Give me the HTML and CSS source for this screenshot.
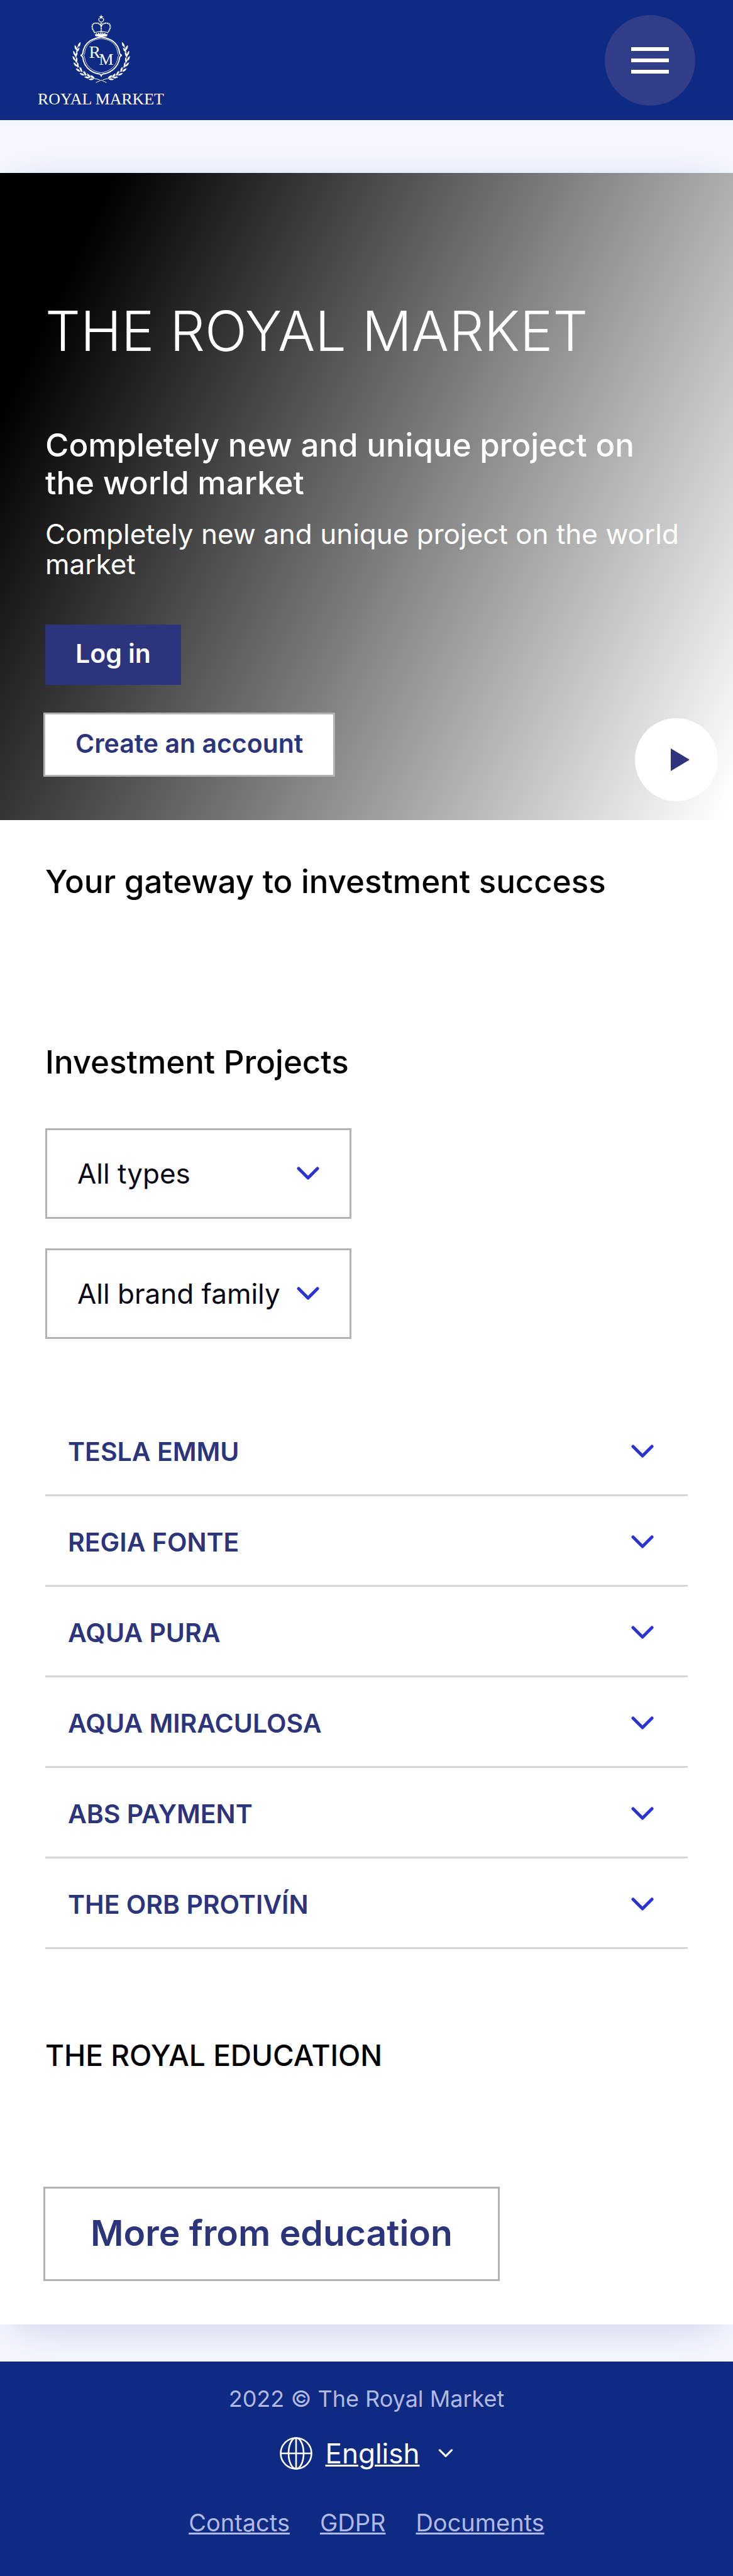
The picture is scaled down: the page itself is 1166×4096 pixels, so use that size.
FILE: index.html
```html
<!DOCTYPE html>
<html lang="en">
<head>
<meta charset="utf-8">
<meta name="viewport" content="width=device-width, initial-scale=1">
<title>The Royal Market</title>
<link rel="stylesheet" href="styles.css">
</head>
<body>
<svg width="0" height="0" class="defs" aria-hidden="true">
  <symbol id="chevron" viewBox="0 0 36 22"><path d="M3 3l15 15L33 3" fill="none" stroke="currentColor" stroke-width="5" stroke-linecap="round" stroke-linejoin="round"/></symbol>
  <symbol id="leaf" viewBox="-6 -10 12 10" overflow="visible"><path d="M0 0Q-3-4 0-9Q3-4 0 0z" fill="#fff"/></symbol>
</svg>
<header class="header">
  <a class="logo" href="#" aria-label="Royal Market">
    <svg viewBox="58 22 208 150" fill="none" stroke="#fff">
      <path d="M161.500 24l1 2.600 2.800.1-2.200 1.700.8 2.700-2.400-1.600-2.400 1.600.8-2.700-2.200-1.700 2.800-.1z" fill="#fff" stroke="none"/>
      <path d="M158.500 29.500a3.800 3.800 0 1 0 6 0" stroke-width="1.200"/>
      <path d="M151.500 53c-8-10-4-16 2-15.500 4 0 7 2 8 5 1-3 4-5 8-5 6-.5 10 5.500 2 15.500M161.500 37v16" stroke-width="2.200" stroke-dasharray="1.900 .7"/>
      <path d="M151 52.500q10.500-3 21 0M151.500 56q10-2 20 0" stroke-width="1.200"/>
      <path d="M153 54.300q8.500-2 17 0" stroke-width="1.600" stroke-dasharray="1.600 1.800"/>
      <path d="M151.500 56.500q10-2 20 0l-1 2-6 .8q-3 1-6 0l-6-.8z" fill="#fff" stroke="none"/>
      <path d="M161.500 59.500C164 61 188 61 191 86q1 2.500 3.500 3-2.500.5-3.500 3c-2 20-20 26-26 26.500q-2.500.5-3.500 3-1-2.500-3.500-3c-6-.5-24-6.500-26-26.500q-1-2.500-3.500-3 2.500-.5 3.500-3c3-25 27-25 29.500-26.500z" stroke-width="2"/>
      <path d="M161.500 62.500C165 62.500 186 64 188 86l1.500 3-1.500 3c-2 17-16 23-26.500 25-10.500-2-24.500-8-26.500-25l-1.500-3 1.500-3c2-22 23-23.500 26.500-23.500z" stroke-width=".8"/>
      <g id="branch">
        <path d="M126 70c-10 22-6 50 33 58M153 132.500l8.500-4" stroke-width="1"/>
        <g fill="#fff" stroke="none">
          <use href="#leaf" x="-6" y="-10" width="12" height="10" transform="translate(125 76) rotate(22)"/>
          <use href="#leaf" x="-6" y="-10" width="12" height="10" transform="translate(122 81) rotate(-18)"/>
          <use href="#leaf" x="-6" y="-10" width="12" height="10" transform="translate(122 84) rotate(32)"/>
          <use href="#leaf" x="-6" y="-10" width="12" height="10" transform="translate(120 90) rotate(-20)"/>
          <use href="#leaf" x="-6" y="-10" width="12" height="10" transform="translate(120 92) rotate(24)"/>
          <use href="#leaf" x="-6" y="-10" width="12" height="10" transform="translate(120 98) rotate(-28)"/>
          <use href="#leaf" x="-6" y="-10" width="12" height="10" transform="translate(121 101) rotate(12)"/>
          <use href="#leaf" x="-6" y="-10" width="12" height="10" transform="translate(123 107) rotate(-42)"/>
          <use href="#leaf" x="-6" y="-10" width="12" height="10" transform="translate(124 109) rotate(0)"/>
          <use href="#leaf" x="-6" y="-10" width="12" height="10" transform="translate(128 115) rotate(-54)"/>
          <use href="#leaf" x="-6" y="-10" width="12" height="10" transform="translate(130 116) rotate(-12)"/>
          <use href="#leaf" x="-6" y="-10" width="12" height="10" transform="translate(135 121) rotate(-66)"/>
          <use href="#leaf" x="-6" y="-10" width="12" height="10" transform="translate(137 122) rotate(-22)"/>
          <use href="#leaf" x="-6" y="-10" width="12" height="10" transform="translate(143 125) rotate(-80)"/>
          <use href="#leaf" x="-6" y="-10" width="12" height="10" transform="translate(144 125) rotate(-34)"/>
          <use href="#leaf" x="-6" y="-10" width="12" height="10" transform="translate(150 127) rotate(-92)"/>
          <use href="#leaf" x="-6" y="-10" width="12" height="10" transform="translate(151 126) rotate(-54)"/>
        </g>
      </g>
      <use href="#branch" transform="translate(323 0) scale(-1 1)"/>
      <g class="logo-text">
        <text x="142" y="93" font-size="28">R</text>
        <text x="158" y="104" font-size="26">M</text>
        <text x="60" y="167" font-size="26">ROYAL MARKET</text>
      </g>
    </svg>
  </a>
  <button class="menu" type="button" aria-label="Menu"><span></span><span></span><span></span></button>
</header>

<main class="main">
  <section class="hero">
    <h1 class="hero-title">THE ROYAL MARKET</h1>
    <h2 class="heading hero-lead">Completely new and unique project on the world market</h2>
    <p class="hero-text">Completely new and unique project on the world market</p>
    <div class="hero-actions">
      <button class="btn btn-primary" type="button">Log in</button>
      <button class="btn btn-outline" type="button">Create an account</button>
    </div>
    <button class="play" type="button" aria-label="Play video">
      <svg viewBox="0 0 30 36"><path d="M0 0l30 18L0 36z" fill="#2c347c"/></svg>
    </button>
  </section>

  <section class="content">
    <h2 class="heading">Your gateway to investment success</h2>
    <h2 class="heading projects-title">Investment Projects</h2>
    <div class="filters">
      <div class="filter">
        <select aria-label="Type"><option>All types</option></select>
        <svg class="chevron"><use href="#chevron"/></svg>
      </div>
      <div class="filter">
        <select aria-label="Brand family"><option>All brand family</option></select>
        <svg class="chevron"><use href="#chevron"/></svg>
      </div>
    </div>
    <ul class="projects">
      <li><button type="button">TESLA EMMU<svg class="chevron"><use href="#chevron"/></svg></button></li>
      <li><button type="button">REGIA FONTE<svg class="chevron"><use href="#chevron"/></svg></button></li>
      <li><button type="button">AQUA PURA<svg class="chevron"><use href="#chevron"/></svg></button></li>
      <li><button type="button">AQUA MIRACULOSA<svg class="chevron"><use href="#chevron"/></svg></button></li>
      <li><button type="button">ABS PAYMENT<svg class="chevron"><use href="#chevron"/></svg></button></li>
      <li><button type="button">THE ORB PROTIVÍN<svg class="chevron"><use href="#chevron"/></svg></button></li>
    </ul>
    <h2 class="heading education-title">THE ROYAL EDUCATION</h2>
    <button class="btn btn-outline btn-large" type="button">More from education</button>
  </section>
</main>

<footer class="footer">
  <p class="copyright">2022 © The Royal Market</p>
  <button class="language" type="button" aria-haspopup="listbox">
    <svg class="globe" viewBox="0 0 52 52" fill="none" stroke="#fff" stroke-width="2.600"><circle cx="26" cy="26" r="24.500"/><ellipse cx="26" cy="26" rx="12" ry="24.500"/><path d="M26 1.500v49M1.500 26h49"/></svg>
    <span class="language-name">English</span>
    <svg class="chevron chevron-small"><use href="#chevron"/></svg>
  </button>
  <nav class="links">
    <a href="#">Contacts</a>
    <a href="#">GDPR</a>
    <a href="#">Documents</a>
  </nav>
</footer>
</body>
</html>
```
FILE: styles.css
```css
* { box-sizing: border-box; }

body {
  margin: 0;
  background: #f4f7ff;
  color: #000;
  font-family: Inter, "Open Sans", sans-serif;
  font-size: 44px;
}

h1, h2, p, ul { margin: 0; padding: 0; }
button, select {
  margin: 0;
  border: 0;
  background: none;
  color: inherit;
  font: inherit;
  cursor: pointer;
}
.defs { position: absolute; }

.header {
  display: flex;
  justify-content: space-between;
  align-items: center;
  height: 191px;
  padding: 0 60px 0 58px;
  background: #0f2a83;
}
.logo svg { display: block; width: 207px; height: 150px; }
.logo-text { fill: #fff; stroke: none; font-family: "Liberation Serif", serif; }
.menu {
  display: flex;
  flex-direction: column;
  justify-content: center;
  align-items: center;
  gap: 12px;
  width: 144px;
  height: 144px;
  padding: 0;
  border-radius: 50%;
  background: #323d89;
}
.menu span { width: 60px; height: 6px; background: #fff; }

.main {
  margin: 84px 0 59px;
  background: #fff;
  box-shadow: 0 12px 72px -24px rgba(50, 68, 116, .33);
}

.hero {
  position: relative;
  padding: 201px 72px 72px;
  background: linear-gradient(115deg, #000 11%, #fff 99%);
  color: #fff;
}
.hero-title { font-size: 88px; font-weight: 300; line-height: 100px; }
.heading { font-size: 51px; font-weight: 500; line-height: 60px; }
.hero-lead { margin-top: 102px; }
.hero-text { margin-top: 27px; line-height: 48px; }
.hero-actions {
  display: flex;
  flex-direction: column;
  align-items: flex-start;
  gap: 47px;
  margin-top: 72px;
}
.btn {
  height: 96px;
  padding: 0 48px 4px;
  font-size: 41px;
  font-weight: 600;
}
.btn-primary { background: #2c347c; color: #fff; }
.btn-outline { background: #fff; color: #2c347c; box-shadow: 0 0 0 3px #b3b3b3; }
.btn-large { height: 144px; margin-top: 182px; padding: 0 72px 4px; font-size: 57px; }
.play {
  position: absolute;
  right: 24px;
  bottom: 30px;
  width: 132px;
  height: 132px;
  padding: 0 0 0 12px;
  border-radius: 50%;
  background: #fff;
}
.play svg { display: block; width: 30px; height: 36px; margin: 0 auto; }

.content { padding: 68px 72px 72px; }
.projects-title { margin-top: 227px; }
.filters { display: grid; gap: 47px; margin-top: 75px; }
.filter { display: grid; align-items: center; width: 487px; }
.filter > * { grid-area: 1 / 1; }
.filter select {
  appearance: none;
  width: 100%;
  height: 144px;
  padding: 0 90px 0 48px;
  border: 3px solid #b3b3b3;
  border-radius: 0;
  color: #060614;
}
.chevron { width: 36px; height: 22px; color: #2a34d4; pointer-events: none; }
.filter .chevron { justify-self: end; margin-right: 51px; }

.projects { margin-top: 106px; list-style: none; }
.projects li { border-bottom: 3px solid #d6d6d6; }
.projects button {
  display: flex;
  justify-content: space-between;
  align-items: center;
  width: 100%;
  height: 141px;
  padding: 4px 54px 0 36px;
  color: #2c347c;
  font-size: 41px;
  font-weight: 600;
}
.education-title { margin-top: 139px; font-size: 46px; }

.footer {
  display: flex;
  flex-direction: column;
  align-items: center;
  padding: 32px 24px 58px;
  background: #0f2a83;
  color: #b0b9e2;
  font-size: 36px;
  line-height: 54px;
}
.language {
  display: flex;
  align-items: center;
  height: 60px;
  margin-top: 30px;
  padding: 0;
  color: #fff;
  font-size: 44px;
}
.globe { width: 52px; height: 52px; margin-right: 21px; }
.language-name { text-decoration: underline 3px; }
.chevron-small { width: 24px; height: 14px; margin-left: 30px; color: #fff; }
.links {
  display: flex;
  flex-wrap: wrap;
  justify-content: center;
  gap: 48px;
  margin-top: 53px;
  font-size: 38px;
}
.links a { color: inherit; text-decoration-thickness: 3px; }
```
